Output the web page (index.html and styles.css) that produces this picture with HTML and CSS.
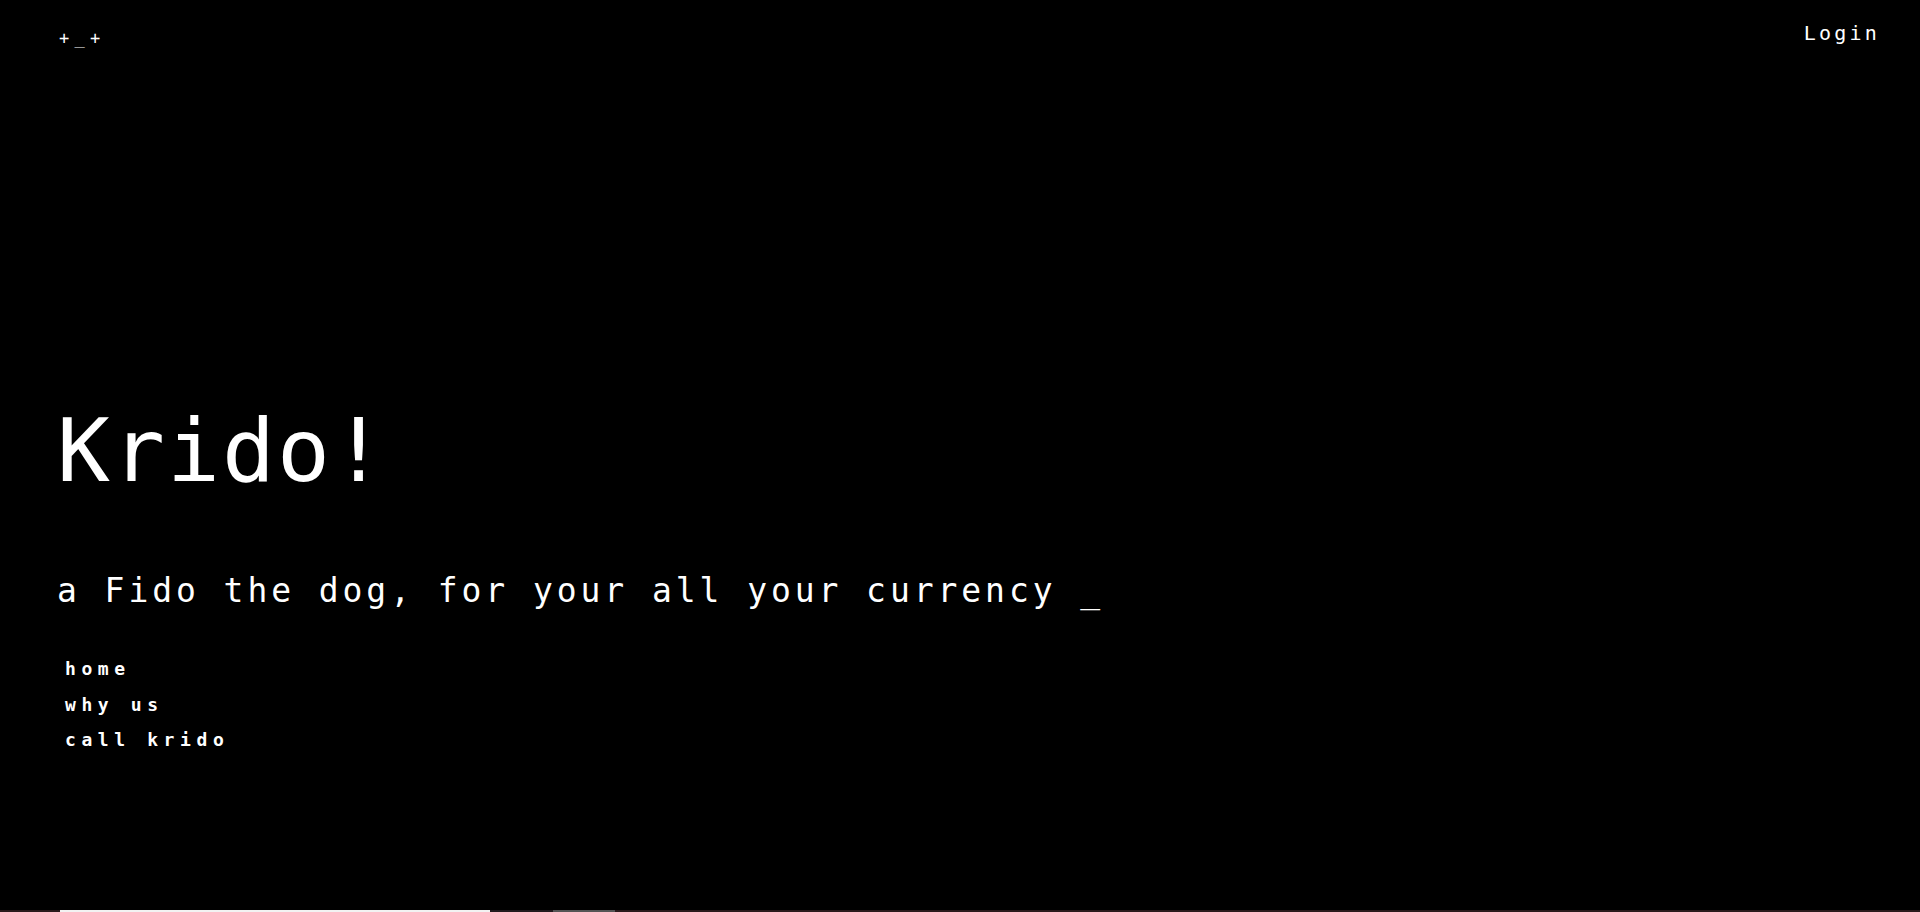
FILE: index.html
```html
<!DOCTYPE html>
<html lang="en">
<head>
<meta charset="utf-8">
<title>Krido!</title>
<link rel="stylesheet" href="styles.css">
</head>
<body>
<div class="page">
  <header class="topbar">
    <div class="logo">+_+</div>
    <a class="login" href="#">Login</a>
  </header>
  <main class="hero">
    <h1 class="title">Krido!</h1>
    <p class="tagline">a Fido the dog, for your all your currency _</p>
    <nav class="menu">
      <a href="#">home</a>
      <a href="#">why us</a>
      <a href="#">call krido</a>
    </nav>
  </main>
  <div class="track">
    <span class="seg seg-lead"></span>
    <span class="seg seg-white"></span>
    <span class="seg seg-gap"></span>
    <span class="seg seg-gray"></span>
    <span class="seg seg-rest"></span>
  </div>
</div>
</body>
</html>
```

FILE: styles.css
```css
html, body {
  margin: 0;
  padding: 0;
  background: #000;
  color: #fff;
  font-family: "DejaVu Sans Mono", "Liberation Mono", monospace;
}

.page {
  height: 912px;
  display: flex;
  flex-direction: column;
  overflow: hidden;
}

.topbar {
  display: flex;
  justify-content: space-between;
  align-items: flex-start;
  padding: 23px 40px 0 59px;
}

.logo {
  margin-top: 7px;
  font-size: 17px;
  line-height: 1;
  letter-spacing: 5.3px;
  color: #fff;
}

.login {
  font-size: 20px;
  line-height: 1;
  letter-spacing: 3.2px;
  color: #fff;
  text-decoration: none;
}

.hero {
  flex: 1;
  padding-left: 57px;
}

.title {
  margin: 360px 0 0;
  font-size: 88px;
  font-weight: normal;
  line-height: 1;
  letter-spacing: 2px;
}

.tagline {
  margin: 79px 0 0;
  font-size: 33px;
  line-height: 1;
  letter-spacing: 3.93px;
}

.menu {
  margin-top: 44px;
  padding-left: 8px;
  display: flex;
  flex-direction: column;
}

.menu a {
  font-size: 18px;
  font-weight: bold;
  line-height: 35.5px;
  letter-spacing: 5.6px;
  color: #fff;
  text-decoration: none;
}

.track {
  height: 2px;
  display: flex;
  background: #2a1a1c;
}

.seg { display: block; height: 2px; }
.seg-lead { width: 60px; background: #2a1a1c; }
.seg-white { width: 430px; background: #f2f2f2; }
.seg-gap { width: 63px; background: #221a1e; }
.seg-gray { width: 62px; background: #555; }
.seg-rest { flex: 1; background: #2a1a1c; }
```
